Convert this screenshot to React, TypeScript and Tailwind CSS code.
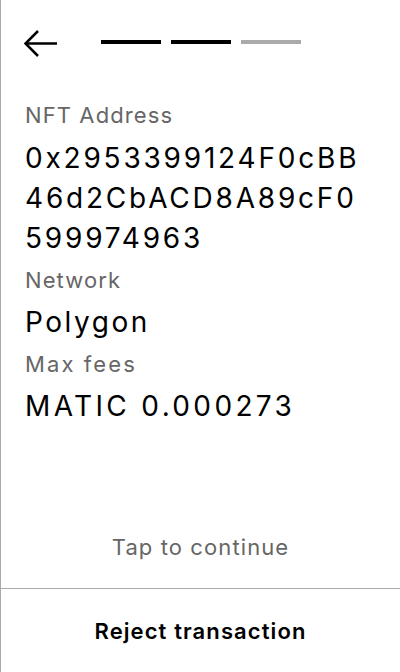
import React from "react";

export default function App() {
  return (
    <div
      className="w-[400px] h-[672px] bg-white flex flex-col border-l border-[#aaaaaa] text-black"
      style={{ fontFamily: "Inter, 'Noto Sans', sans-serif" }}
    >
      <div className="flex items-start pl-[23px] pt-[30px]">
        <svg width="34" height="28" viewBox="0 0 34 28" fill="none">
          <path d="M1.5 13.5 H33" stroke="black" strokeWidth="2.5" />
          <path d="M14 1 L1.5 13.5 L14 26" stroke="black" strokeWidth="2.5" fill="none" />
        </svg>
        <div className="flex gap-[10px] mt-[10px] ml-[43px]">
          <div className="w-[60px] h-[4px] bg-black" />
          <div className="w-[60px] h-[4px] bg-black" />
          <div className="w-[60px] h-[4px] bg-[#aaaaaa]" />
        </div>
      </div>

      <div className="flex flex-col px-[24px] mt-[35px]">
        <div className="text-[22px] leading-[44px] tracking-[0.05em] text-[#666666]">NFT Address</div>
        <div className="text-[28px] leading-[40px] tracking-[0.1em] mt-[1px]">
          <span className="block">0x2953399124F0cBB</span>
          <span className="block">46d2CbACD8A89cF0</span>
          <span className="block">599974963</span>
        </div>
        <div className="text-[22px] leading-[44px] tracking-[0.05em] text-[#666666]">Network</div>
        <div className="text-[28px] leading-[40px] tracking-[0.09em]">Polygon</div>
        <div className="text-[22px] leading-[44px] tracking-[0.095em] text-[#666666]">Max fees</div>
        <div className="text-[28px] leading-[40px] tracking-[0.12em]">MATIC 0.000273</div>
      </div>

      <div className="flex-1" />

      <div className="text-[22px] leading-[44px] tracking-[0.05em] text-[#666666] text-center pb-[19px]">
        Tap to continue
      </div>
      <div className="h-[84px] border-t border-[#aaaaaa] flex items-center justify-center">
        <span className="text-[22px] font-semibold leading-[44px] tracking-[0.05em]">Reject transaction</span>
      </div>
    </div>
  );
}
